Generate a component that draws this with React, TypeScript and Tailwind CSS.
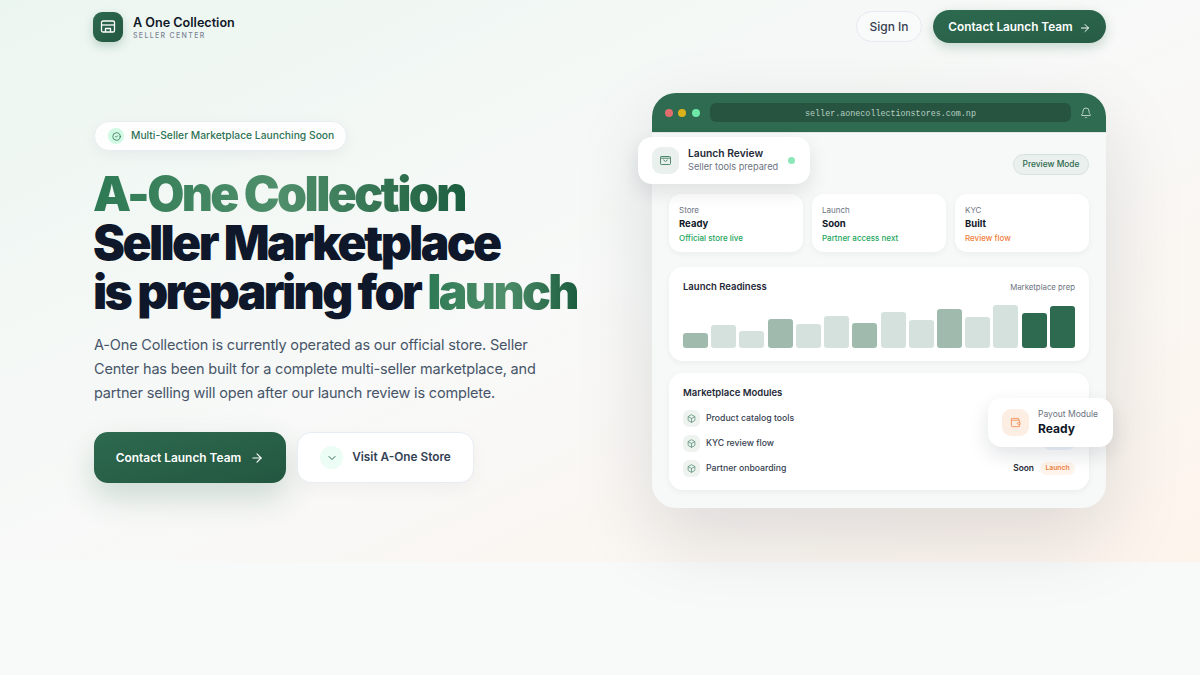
import { ArrowRight, Bell, Box, ChevronDown, CircleCheck, Wallet } from 'lucide-react';

const stats = [
  { label: 'Store', value: 'Ready', note: 'Official store live', noteClass: 'text-[#22a55b]' },
  { label: 'Launch', value: 'Soon', note: 'Partner access next', noteClass: 'text-[#22a55b]' },
  { label: 'KYC', value: 'Built', note: 'Review flow', noteClass: 'text-[#f0803c]' },
];

const bars = [
  { h: 15, c: 'bg-[#a0bbad]' },
  { h: 23, c: 'bg-[#d5e1dc]' },
  { h: 17, c: 'bg-[#d5e1dc]' },
  { h: 29, c: 'bg-[#a0bbad]' },
  { h: 24, c: 'bg-[#d5e1dc]' },
  { h: 32, c: 'bg-[#d5e1dc]' },
  { h: 25, c: 'bg-[#a0bbad]' },
  { h: 36, c: 'bg-[#d5e1dc]' },
  { h: 28, c: 'bg-[#d5e1dc]' },
  { h: 39, c: 'bg-[#a0bbad]' },
  { h: 31, c: 'bg-[#d5e1dc]' },
  { h: 43, c: 'bg-[#d5e1dc]' },
  { h: 35, c: 'bg-[#2d6a4f]' },
  { h: 42, c: 'bg-[#2d6a4f]' },
];

const modules = ['Product catalog tools', 'KYC review flow', 'Partner onboarding'];

function ShopIcon() {
  return (
    <svg width="16" height="13" viewBox="0 0 16 13" fill="none" stroke="currentColor" strokeWidth="1.3" strokeLinejoin="round">
      <rect x="1.5" y="1" width="13" height="11" rx="1.6" />
      <path d="M1.5 5h13" />
      <path d="M5.5 12V8.5h5V12" />
    </svg>
  );
}

function ReviewIcon() {
  return (
    <svg width="11" height="9" viewBox="0 0 11 9" fill="none" stroke="currentColor" strokeWidth="1" strokeLinecap="round" strokeLinejoin="round">
      <rect x="0.5" y="0.5" width="10" height="8" rx="0.8" />
      <path d="M0.5 2.2h10" />
      <path d="M3.6 4l1.9 1.5L7.4 4" />
    </svg>
  );
}

export default function App() {
  return (
    <div className="min-h-screen bg-[#f8faf9] font-['Inter',sans-serif] text-[#0f172a]">
      <div className="h-[562px] bg-gradient-to-br from-[#ecf6f1] via-[#f8f9f8] to-[#fdf4ec] px-[94px]">
        {/* Nav */}
        <nav className="flex h-[53px] items-center justify-between">
          <div className="flex items-center gap-[10px]">
            <div className="-ml-px flex h-[30px] w-[30px] items-center justify-center rounded-[9px] bg-gradient-to-br from-[#2d6a4f] to-[#235640] text-white shadow-[0_4px_10px_rgba(45,106,79,0.25)]">
              <ShopIcon />
            </div>
            <div className="pt-[2px]">
              <div className="text-[12.6px] leading-[15px] font-semibold text-[#111827]">A One Collection</div>
              <div className="mt-[1px] text-[7px] leading-[9px] font-medium tracking-[0.19em] text-[#7b8494]">SELLER CENTER</div>
            </div>
          </div>
          <div className="flex items-center gap-[11px]">
            <button className="h-[31px] w-[66px] rounded-full border border-[#e5e9f0] bg-[#f9fbfa] text-[12px] font-medium text-[#374151]">Sign In</button>
            <button className="flex h-[33px] w-[173px] items-center justify-center gap-[6px] rounded-full bg-gradient-to-br from-[#2d6a4f] to-[#275c45] pt-[2px] text-[11.8px] font-semibold text-white shadow-[0_4px_12px_rgba(45,106,79,0.25)]">
              Contact Launch Team
              <ArrowRight size={12} />
            </button>
          </div>
        </nav>

        {/* Hero */}
        <div className="flex items-start justify-between">
          {/* Left column */}
          <div className="pt-[68px]">
            <div className="flex h-[30px] w-[253px] items-center gap-[7px] rounded-full border border-[#e8edf1] bg-white/90 pl-[13px] shadow-[0_4px_14px_rgba(15,23,42,0.05)]">
              <span className="flex h-[16px] w-[16px] items-center justify-center rounded-full bg-[#d1fae5] text-[#2d6a4f]">
                <CircleCheck size={9} />
              </span>
              <span className="text-[10.3px] font-medium text-[#2f7355]">Multi-Seller Marketplace Launching Soon</span>
            </div>

            <h1 className="mt-[18px] -ml-px text-[48px] leading-[49px] font-black tracking-[-0.054em] text-[#0f172a]">
              <span className="bg-gradient-to-r from-[#2d7a54] via-[#4f8f6b] to-[#1b5e3f] bg-clip-text text-transparent">A-One Collection</span>
              <br />
              Seller Marketplace
              <br />
              is preparing for{' '}
              <span className="bg-gradient-to-r from-[#2d7a54] via-[#4f8f6b] to-[#1b5e3f] bg-clip-text text-transparent">launch</span>
            </h1>

            <p className="mt-[17px] w-[445px] text-[14.5px] leading-[24px] tracking-[-0.012em] text-[#475569]">
              A-One Collection is currently operated as our official store. Seller Center has been built for a complete multi-seller marketplace, and partner selling will open after our launch review is complete.
            </p>

            <div className="mt-[27px] flex items-center gap-[11px]">
              <button className="flex h-[51px] w-[192px] items-center justify-center gap-[9px] rounded-[14px] bg-gradient-to-br from-[#2d6a4f] to-[#235640] text-[11.9px] font-semibold text-white shadow-[0_14px_32px_rgba(45,106,79,0.22)]">
                Contact Launch Team
                <ArrowRight size={14} />
              </button>
              <button className="flex h-[51px] w-[177px] items-center justify-center gap-[9px] rounded-[14px] border border-[#e8edf3] bg-white text-[11.8px] font-semibold text-[#334155] shadow-[0_6px_18px_rgba(15,23,42,0.04)]">
                <span className="flex h-[23px] w-[23px] items-center justify-center rounded-full bg-[#ecfdf5] text-[#2d6a4f]">
                  <ChevronDown size={12} />
                </span>
                Visit A-One Store
              </button>
            </div>
          </div>

          {/* Mockup */}
          <div className="relative mt-[40px] w-[454px]">
            <div className="overflow-hidden rounded-[24px] bg-[#f7f9f8] shadow-[0_28px_80px_rgba(15,23,42,0.13)]">
              <div className="flex h-[40px] items-center border-b border-[#dfe8e3] bg-[#2f6b50] pr-[14px] pl-[13px]">
                <span className="h-[8px] w-[8px] rounded-full bg-[#e26d6d]" />
                <span className="ml-[5px] h-[8px] w-[8px] rounded-full bg-[#dcb21b]" />
                <span className="ml-[6px] h-[8px] w-[8px] rounded-full bg-[#6ee7a8]" />
                <div className="ml-[10px] flex h-[19px] flex-1 items-center justify-center rounded-[6px] bg-[#275441] pt-[3px] font-['Liberation_Mono',monospace] text-[8.4px] leading-[16px] text-[#b9d0c4]">
                  seller.aonecollectionstores.com.np
                </div>
                <Bell size={12} className="ml-[9px] text-[#b9d0c4]" />
              </div>

              <div className="px-[17px] pt-[21px] pb-[18px]">
                <div className="flex justify-end">
                  <span className="flex h-[21px] w-[76px] items-center justify-center rounded-full border border-[#d5e1dc] bg-[#eaf0ed] text-[8.4px] font-medium text-[#2d6a4f]">Preview Mode</span>
                </div>

                <div className="mt-[19px] grid grid-cols-3 gap-[9px]">
                  {stats.map((s) => (
                    <div key={s.label} className="h-[58px] rounded-[12px] bg-white px-[10px] pt-[11px] shadow-[0_2px_6px_rgba(15,23,42,0.05)]">
                      <div className="text-[8px] leading-[10px] text-[#6b7280]">{s.label}</div>
                      <div className="mt-[3px] text-[9.5px] leading-[12px] font-bold text-[#111827]">{s.value}</div>
                      <div className={`mt-[2px] text-[8px] leading-[12px] font-medium ${s.noteClass}`}>{s.note}</div>
                    </div>
                  ))}
                </div>

                <div className="mt-[15px] h-[94px] rounded-[14px] bg-white px-[14px] pt-[14px] shadow-[0_2px_6px_rgba(15,23,42,0.05)]">
                  <div className="flex items-center justify-between">
                    <span className="text-[9.5px] leading-[12px] font-semibold text-[#1f2937]">Launch Readiness</span>
                    <span className="text-[7.8px] leading-[12px] text-[#6b7280]">Marketplace prep</span>
                  </div>
                  <div className="mt-[12px] flex h-[43px] items-end justify-between">
                    {bars.map((b, i) => (
                      <div key={i} className={`w-[25px] rounded-[3px] ${b.c}`} style={{ height: b.h }} />
                    ))}
                  </div>
                </div>

                <div className="mt-[12px] h-[117px] rounded-[14px] bg-white px-[14px] pt-[14px] shadow-[0_2px_6px_rgba(15,23,42,0.05)]">
                  <div className="text-[9.5px] leading-[12px] font-semibold text-[#1f2937]">Marketplace Modules</div>
                  <div className="mt-[11px] flex flex-col gap-[8px]">
                    {modules.map((m, i) => (
                      <div key={m} className="flex h-[17px] items-center">
                        <span className="flex h-[17px] w-[17px] items-center justify-center rounded-[6px] bg-[#eef3f0] text-[#5e9379]">
                          <Box size={9} strokeWidth={2.2} />
                        </span>
                        <span className="ml-[6px] text-[8.7px] font-medium text-[#374151]">{m}</span>
                        {i === 1 && <span className="ml-auto h-[13px] w-[32px] rounded-full bg-[#eff6ff]" />}
                        {i === 2 && (
                          <div className="ml-auto flex items-center gap-[6px]">
                            <span className="text-[8.4px] font-semibold text-[#1f2937]">Soon</span>
                            <span className="flex h-[13px] w-[35px] items-center justify-center rounded-full bg-[#fff5ec] text-[6.8px] font-semibold text-[#f0803c]">Launch</span>
                          </div>
                        )}
                      </div>
                    ))}
                  </div>
                </div>
              </div>
            </div>

            {/* Floating cards */}
            <div className="absolute top-[44px] -left-[14px] flex h-[47px] w-[172px] items-center rounded-[14px] bg-white pl-[14px] shadow-[0_8px_20px_rgba(15,23,42,0.1)]">
              <span className="flex h-[27px] w-[27px] items-center justify-center rounded-[9px] bg-[#eaf0ed] text-[#4f8a6d]">
                <ReviewIcon />
              </span>
              <div className="ml-[9px] -mt-[2px]">
                <div className="text-[10.3px] leading-[14px] font-semibold text-[#1f2937]">Launch Review</div>
                <div className="text-[9.2px] leading-[13px] text-[#6b7280]">Seller tools prepared</div>
              </div>
              <span className="ml-[10px] h-[7px] w-[7px] rounded-full bg-[#8ce8b8]" />
            </div>

            <div className="absolute top-[305px] -right-[7px] flex h-[49px] w-[125px] items-center rounded-[14px] bg-white pl-[14px] shadow-[0_8px_20px_rgba(15,23,42,0.12)]">
              <span className="flex h-[27px] w-[27px] items-center justify-center rounded-[9px] bg-[#fdeee4] text-[#f0925a]">
                <Wallet size={11} />
              </span>
              <div className="ml-[9px]">
                <div className="text-[8.5px] leading-[13px] text-[#6b7280]">Payout Module</div>
                <div className="text-[12px] leading-[16px] font-bold text-[#111827]">Ready</div>
              </div>
            </div>
          </div>
        </div>
      </div>
    </div>
  );
}
